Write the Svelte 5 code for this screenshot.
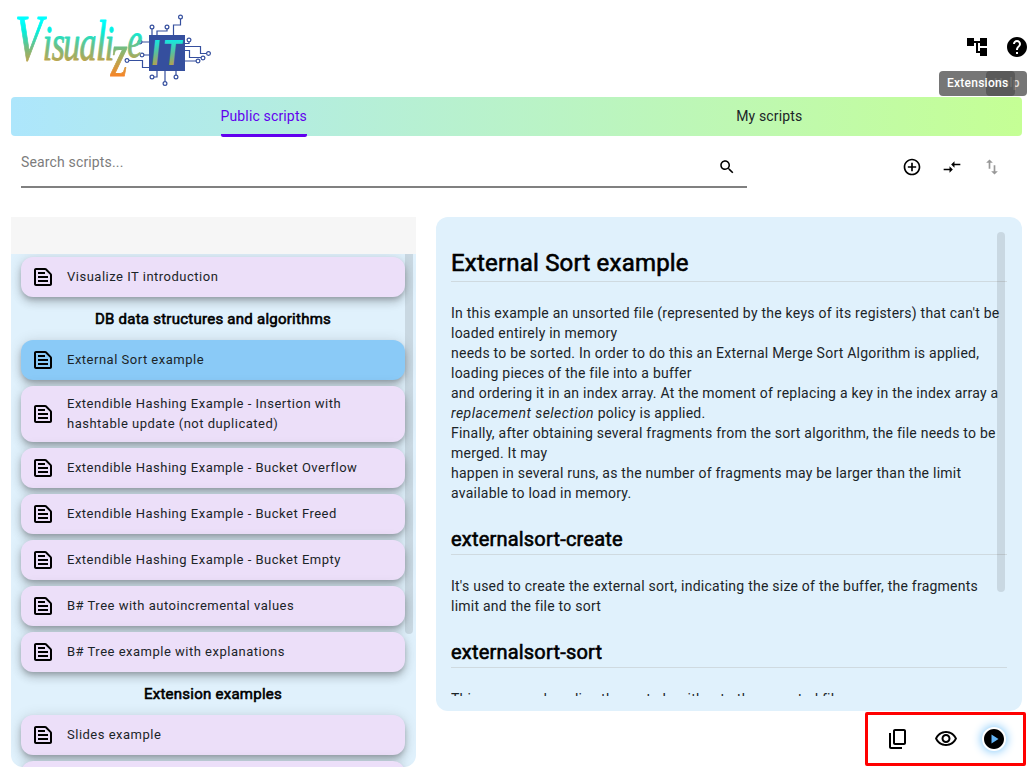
<script>
  const entries = [
    { label: 'Visualize IT introduction' },
    { heading: 'DB data structures and algorithms' },
    { label: 'External Sort example', selected: true },
    { label: 'Extendible Hashing Example - Insertion with hashtable update (not duplicated)' },
    { label: 'Extendible Hashing Example - Bucket Overflow' },
    { label: 'Extendible Hashing Example - Bucket Freed' },
    { label: 'Extendible Hashing Example - Bucket Empty' },
    { label: 'B# Tree with autoincremental values' },
    { label: 'B# Tree example with explanations' },
    { heading: 'Extension examples' },
    { label: 'Slides example' },
    { label: '' }
  ];
  const icons = {
    tree: 'M22 11V3h-7v3H9V3H2v8h7V8h2v10h4v3h7v-8h-7v3h-2V8h2v3z',
    help: 'M12 2C6.48 2 2 6.48 2 12s4.48 10 10 10 10-4.48 10-10S17.52 2 12 2zm1 17h-2v-2h2v2zm2.07-7.75l-.9.92C13.45 12.9 13 13.5 13 15h-2v-.5c0-1.1.45-2.1 1.17-2.83l1.24-1.26c.37-.36.59-.86.59-1.41 0-1.1-.9-2-2-2s-2 .9-2 2H8c0-2.21 1.79-4 4-4s4 1.79 4 4c0 .88-.36 1.68-.93 2.25z',
    search: 'M15.5 14h-.79l-.28-.27C15.41 12.59 16 11.11 16 9.5 16 5.91 13.09 3 9.5 3S3 5.91 3 9.5 5.91 16 9.5 16c1.61 0 3.09-.59 4.23-1.57l.27.28v.79l5 4.99L20.49 19l-4.99-5zm-6 0C7.01 14 5 11.99 5 9.5S7.01 5 9.5 5 14 7.01 14 9.5 11.99 14 9.5 14z',
    add: 'M13 7h-2v4H7v2h4v4h2v-4h4v-2h-4V7zm-1-5C6.48 2 2 6.48 2 12s4.48 10 10 10 10-4.48 10-10S17.52 2 12 2zm0 18c-4.41 0-8-3.59-8-8s3.59-8 8-8 8 3.59 8 8-3.59 8-8 8z',
    compare: 'M9.01 14H2v2h7.01v3L13 15l-3.99-4v3zm5.98-1v-3H22V8h-7.01V5L11 9l3.99 4z',
    sort: 'M9 3L5 6.99h3V14h2V6.99h3L9 3zm7 14.01V10h-2v7.01h-3L15 21l4-3.99h-3z',
    doc: 'M20.41 8.41l-4.83-4.83C15.21 3.21 14.7 3 14.17 3H5c-1.1 0-2 .9-2 2v14c0 1.1.9 2 2 2h14c1.1 0 2-.9 2-2V9.83c0-.53-.21-1.04-.59-1.42zM19 19H5V5h9.17L19 9.83V19zM7 7h7v2H7zM7 11h10v2H7zM7 15h10v2H7z',
    copy: 'M18 2H9c-1.1 0-2 .9-2 2v12c0 1.1.9 2 2 2h9c1.1 0 2-.9 2-2V4c0-1.1-.9-2-2-2zm0 14H9V4h9v12zM3 6v14c0 1.1.9 2 2 2h11v-2H5V6z',
    eye: 'M12 6c3.79 0 7.17 2.13 8.82 5.5C19.17 14.87 15.79 17 12 17s-7.17-2.13-8.82-5.5C4.83 8.13 8.21 6 12 6m0-2C7 4 2.73 7.11 1 11.5 2.73 15.89 7 19 12 19s9.27-3.11 11-7.5C21.27 7.11 17 4 12 4zm0 5c1.38 0 2.5 1.12 2.5 2.5S13.38 14 12 14s-2.5-1.12-2.5-2.5S10.62 9 12 9m0-2c-2.48 0-4.5 2.02-4.5 4.5S9.52 16 12 16s4.5-2.02 4.5-4.5S14.48 7 12 7z',
    play: 'M12 2C6.48 2 2 6.48 2 12s4.48 10 10 10 10-4.48 10-10S17.52 2 12 2zM9.5 16.5v-9l7 4.5-7 4.5z'
  };
  const pads = [[152,27],[167,27],[180.5,17],[140,42],[142,55],[127,60.5],[189,40],[208.5,53.5],[203,58],[198,61],[152,77],[165,83.5],[176,77]];
</script>

{#snippet icon(name, size)}
  <svg class="icon" width={size} height={size} viewBox="0 0 24 24"><path d={icons[name]} /></svg>
{/snippet}

<div class="app">
  <header>
    <svg class="logo" width="215" height="90" viewBox="0 0 215 90">
      <defs>
        <linearGradient id="word" gradientUnits="userSpaceOnUse" x1="0" y1="16" x2="0" y2="78">
          <stop offset="0.08" stop-color="#00ffff" /><stop offset="0.25" stop-color="#05eedb" />
          <stop offset="0.5" stop-color="#70bd83" /><stop offset="0.72" stop-color="#b8a650" /><stop offset="1" stop-color="#ff8122" />
        </linearGradient>
        <linearGradient id="it" gradientUnits="userSpaceOnUse" x1="0" y1="40" x2="0" y2="66">
          <stop offset="0" stop-color="#14e8e0" /><stop offset="0.5" stop-color="#5dbd9b" /><stop offset="1" stop-color="#b5a149" />
        </linearGradient>
      </defs>
      <g class="circuit">
        <path d="M152 29v6M167 29v2h-10v4M180.500 19v6h-7v10M142 42h7M144 55h5M129 60.500h13.500v7h6.500M185 43.500h4v-1.500M185 46.500h15.500v7h6M185 50.500h4.500v7h11.500M185 61h11M157 71v6h-3M165 71v10.500M176 71v4" />
        {#each pads as [x, y]}<circle cx={x} cy={y} r="1.900" />{/each}
      </g>
      <rect x="149" y="35" width="36" height="36" fill="#354f9e" />
      <text class="word" transform="scale(.68 1)" fill="url(#word)" stroke="url(#word)" y="60"><tspan class="cap" x="22">V</tspan><tspan x="63 76 93 117">isua</tspan><tspan class="tall" x="141">l</tspan><tspan x="154">i</tspan><tspan class="tail" x="163" y="76">z</tspan><tspan x="187" y="57">e</tspan></text>
      <text class="it" fill="url(#it)" x="151 163" y="65">IT</text>
    </svg>
    <div class="top-actions">
      {@render icon('tree', 24)}
      {@render icon('help', 24)}
      <span class="tip help">Help</span>
      <span class="tip ext">Extensions</span>
    </div>
  </header>

  <nav>
    <div class="tab active"><span>Public scripts</span></div>
    <div class="tab"><span>My scripts</span></div>
  </nav>

  <div class="toolbar">
    <div class="search"><span>Search scripts...</span>{@render icon('search', 18)}</div>
    <div class="tools">
      {@render icon('add', 20)}
      {@render icon('compare', 20)}
      <span class="disabled">{@render icon('sort', 20)}</span>
    </div>
  </div>

  <main>
    <aside>
      <div class="list-head"></div>
      <div class="list">
        {#each entries as e}
          {#if e.heading}
            <h3>{e.heading}</h3>
          {:else}
            <div class="item" class:selected={e.selected}>{@render icon('doc', 24)}<span>{e.label}</span></div>
          {/if}
        {/each}
        <div class="bar"></div>
      </div>
    </aside>
    <section>
      <article>
        <div class="scroll">
          <h1>External Sort example</h1>
          <p>In this example an unsorted file (represented by the keys of its registers) that can't be<br />loaded entirely in memory<br />needs to be sorted. In order to do this an External Merge Sort Algorithm is applied,<br />loading pieces of the file into a buffer<br />and ordering it in an index array. At the moment of replacing a key in the index array a<br /><em>replacement selection</em> policy is applied.<br />Finally, after obtaining several fragments from the sort algorithm, the file needs to be<br />merged. It may<br />happen in several runs, as the number of fragments may be larger than the limit<br />available to load in memory.</p>
          <h2>externalsort-create</h2>
          <p>It's used to create the external sort, indicating the size of the buffer, the fragments<br />limit and the file to sort</p>
          <h2>externalsort-sort</h2>
          <p>This command applies the sort algorithm to the mounted file</p>
          <div class="bar"></div>
        </div>
      </article>
      <footer>
        {@render icon('copy', 24)}
        {@render icon('eye', 24)}
        <span class="play">{@render icon('play', 24)}</span>
      </footer>
    </section>
  </main>
</div>

<style>
  :global(body) { background: #fff; overflow: hidden; }
  .app { box-sizing: border-box; width: 1035px; height: 779px; padding: 0 13px 12px 11px; display: flex; flex-direction: column; font-family: Roboto, sans-serif; color: #1b2428; overflow: hidden; }
  .icon { display: block; flex: none; fill: #000; }
  header { height: 97px; flex: none; display: flex; justify-content: space-between; }
  .logo { margin-left: -11px; overflow: visible; }
  .circuit { fill: none; stroke: #354f9e; stroke-width: 1.2; }
  .circuit circle { fill: #fff; }
  .word { font: italic 50px "Liberation Serif", serif; stroke-width: .9; stroke-linejoin: round; }
  .cap { font-size: 66px; }
  .tall { font-size: 58px; }
  .tail { font-size: 64px; }
  .it { font: italic 700 34px Lato, sans-serif; }
  .top-actions { position: relative; display: flex; gap: 16px; padding-top: 35px; margin-right: -7px; }
  .tip { position: absolute; top: 71px; box-sizing: border-box; height: 25px; padding: 0 8px; border-radius: 4px; background: rgba(84,84,84,.8); color: #fff; font-size: 12px; font-weight: 500; line-height: 25px; letter-spacing: .25px; white-space: nowrap; }
  .help { right: 2px; color: #ddd; width: 41px; }
  .ext { right: 14px; width: 76px; }
  nav { height: 39px; flex: none; display: grid; grid-template-columns: 1fr 1fr; border-radius: 4px; background: linear-gradient(90deg, #ade6fc, #c5ff95); }
  .tab { display: flex; justify-content: center; font-size: 14px; line-height: 38px; letter-spacing: .15px; }
  .tab span { height: 40px; box-sizing: border-box; }
  .active span { color: #6200ee; border-bottom: 3px solid #6200ee; border-radius: 0 0 2px 2px; }
  .toolbar { height: 81px; flex: none; padding: 0 20px 0 10px; display: flex; justify-content: space-between; align-items: flex-start; }
  .search { width: 726px; height: 52px; box-sizing: border-box; border-bottom: 2px solid #808080; display: flex; justify-content: space-between; padding: 18px 11px 0 0; font-size: 14px; line-height: 17px; letter-spacing: .15px; color: #7c7c7c; }
  .search .icon { margin-top: 4px; }
  .tools { display: flex; gap: 20px; padding-top: 21px; }
  .disabled { opacity: .4; }
  main { flex: 1; min-height: 0; display: flex; gap: 20px; }
  aside { width: 405px; flex: none; border-radius: 0 0 12px 12px; background: #e0f1fc; overflow: hidden; display: flex; flex-direction: column; }
  .list-head { height: 37px; flex: none; background: #f6f6f6; }
  .list { flex: 1; min-height: 0; position: relative; overflow: hidden; padding: 3px 11px 0 10px; display: flex; flex-direction: column; gap: 6px; }
  .item { box-sizing: border-box; min-height: 40px; flex: none; border-radius: 12px; background: #ecdff9; padding: 8px 10px; display: flex; align-items: center; gap: 12px; font-size: 13px; line-height: 20px; letter-spacing: .5px; box-shadow: 0 3px 5px -1px rgba(0,0,0,.2), 0 6px 10px rgba(0,0,0,.14), 0 1px 14px rgba(0,0,0,.12); }
  .item span { width: 300px; }
  .selected { background: #8acaf7; }
  h1, h2, h3 { margin: 0; font-weight: 400; color: #000; -webkit-text-stroke: .6px #000; letter-spacing: .2px; }
  h3 { height: 31px; flex: none; text-align: center; font-size: 15px; line-height: 32px; letter-spacing: .25px; }
  .bar { position: absolute; width: 8px; background: rgba(0,0,0,.1); }
  .list .bar { left: 394px; top: 0; height: 380px; border-radius: 0 0 4px 4px; }
  section { flex: 1; min-width: 0; display: flex; flex-direction: column; }
  article { box-sizing: border-box; height: 494px; flex: none; border-radius: 12px; background: #e0f1fc; padding: 15px; }
  .scroll { position: relative; height: 464px; overflow: hidden; white-space: nowrap; }
  h1 { height: 49px; border-bottom: 1px solid #cfdae0; font-size: 24px; line-height: 62px; box-sizing: content-box; }
  h2 { height: 32px; margin-top: 19px; border-bottom: 1px solid #cfdae0; font-size: 20px; line-height: 34px; }
  p { margin: 21px 0 0; font-size: 14px; line-height: 20px; letter-spacing: .24px; }
  em { letter-spacing: .45px; }
  .scroll .bar { right: 2px; top: 0; height: 360px; border-radius: 4px; }
  footer { box-sizing: border-box; width: 161px; height: 54px; margin-top: 1px; margin-left: auto; margin-right: -4px; border: 3px solid #f00; border-radius: 2px; display: flex; align-items: center; gap: 24px; padding-left: 18px; }
  .play { border-radius: 50%; background: radial-gradient(circle, #64b5f6 0 9px, transparent 9px); box-shadow: 0 0 10px 1px #84c9fa; }
</style>
